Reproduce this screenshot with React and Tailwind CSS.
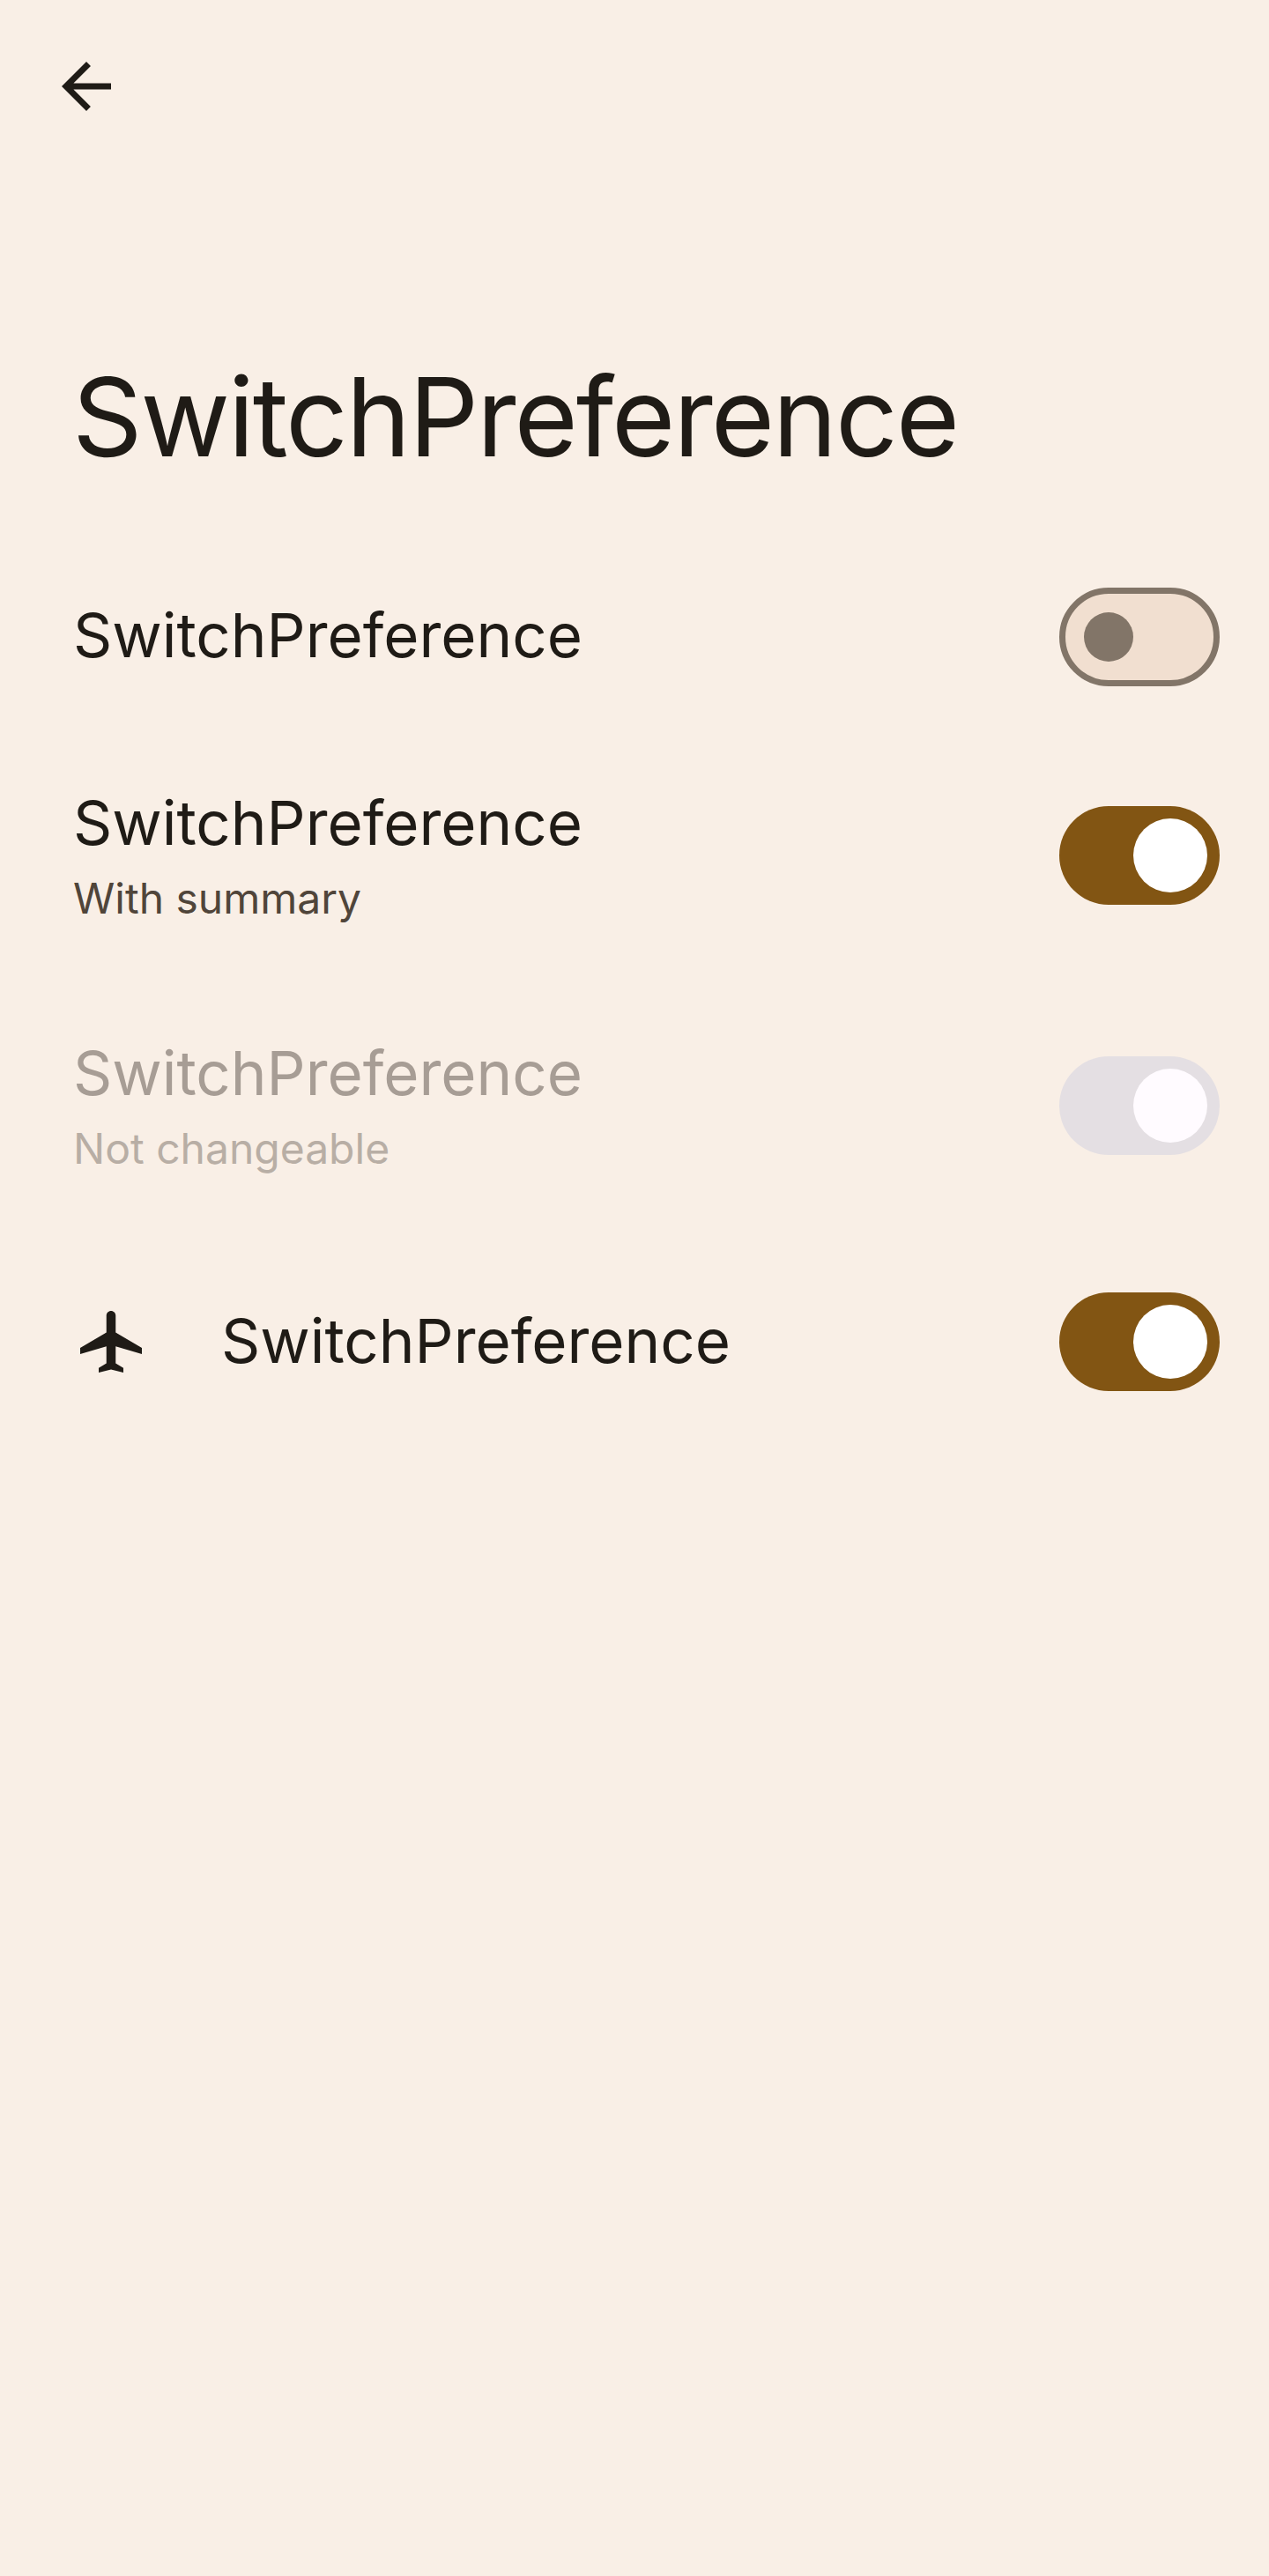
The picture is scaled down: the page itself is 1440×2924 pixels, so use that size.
function Switch({ kind }) {
  if (kind === "off") {
    return (
      <span className="flex h-[112px] w-[182px] shrink-0 items-center rounded-full border-[7px] border-[#827568] bg-[#f1dfd0] pl-[21px]">
        <span className="size-[56px] rounded-full bg-[#827568]" />
      </span>
    );
  }
  const disabled = kind === "disabled";
  return (
    <span className={`flex h-[112px] w-[182px] shrink-0 items-center justify-end rounded-full pr-[14px] ${disabled ? "bg-[#e4dfe3]" : "bg-[#825513]"}`}>
      <span className={`size-[84px] rounded-full ${disabled ? "bg-[#fffbff]" : "bg-white"}`} />
    </span>
  );
}

function Row({ height, kind, summary, icon, textPadding = "" }) {
  const disabled = kind === "disabled";
  return (
    <div className={`flex items-center pl-[84px] pr-[56px] ${height}`}>
      {icon && <span className="w-[168px] shrink-0">{icon}</span>}
      <div className={`-ml-px flex-1 ${textPadding}`}>
        <div className={`text-[69px] leading-[84px] ${disabled ? "text-[#a79d95]" : "text-[#1f1b16]"}`}>
          SwitchPreference
        </div>
        {summary && (
          <div className={`mt-[14px] text-[48px] leading-[60px] ${disabled ? "text-[#b8aea5]" : "text-[#50453a]"}`}>
            {summary}
          </div>
        )}
      </div>
      <Switch kind={kind} />
    </div>
  );
}

function BackIcon() {
  return (
    <svg className="size-[84px]" viewBox="0 0 24 24" fill="#1f1b16">
      <path d="M20 11H7.83l5.59-5.59L12 4l-8 8 8 8 1.41-1.41L7.83 13H20v-2z" />
    </svg>
  );
}

function PlaneIcon() {
  return (
    <svg className="size-[84px]" viewBox="0 0 24 24" fill="#1f1b16">
      <path d="M22 16v-2l-8.5-5V3.5c0-.83-.67-1.5-1.5-1.5s-1.5.67-1.5 1.5V9L2 14v2l8.5-2.5V19L8 20.5V22l4-1 4 1v-1.5L13.5 19v-5.5L22 16z" />
    </svg>
  );
}

export default function App() {
  return (
    <main className="min-h-[2924px] w-[1440px] bg-[#f9efe6] font-['Inter',sans-serif]">
      <header className="h-[403px] pl-[56px] pt-[56px]">
        <BackIcon />
      </header>
      <h1 className="h-[203px] pl-[82px] text-[124px] leading-[140px] tracking-[-2.1px] text-[#1f1b16]">SwitchPreference</h1>
      <Row height="h-[234px]" kind="off" textPadding="pb-[4px]" />
      <Row height="h-[262px]" kind="on" summary="With summary" />
      <Row height="h-[306px]" kind="disabled" summary="Not changeable" />
      <Row height="h-[230px]" kind="on" icon={<PlaneIcon />} textPadding="pb-[2px]" />
    </main>
  );
}
